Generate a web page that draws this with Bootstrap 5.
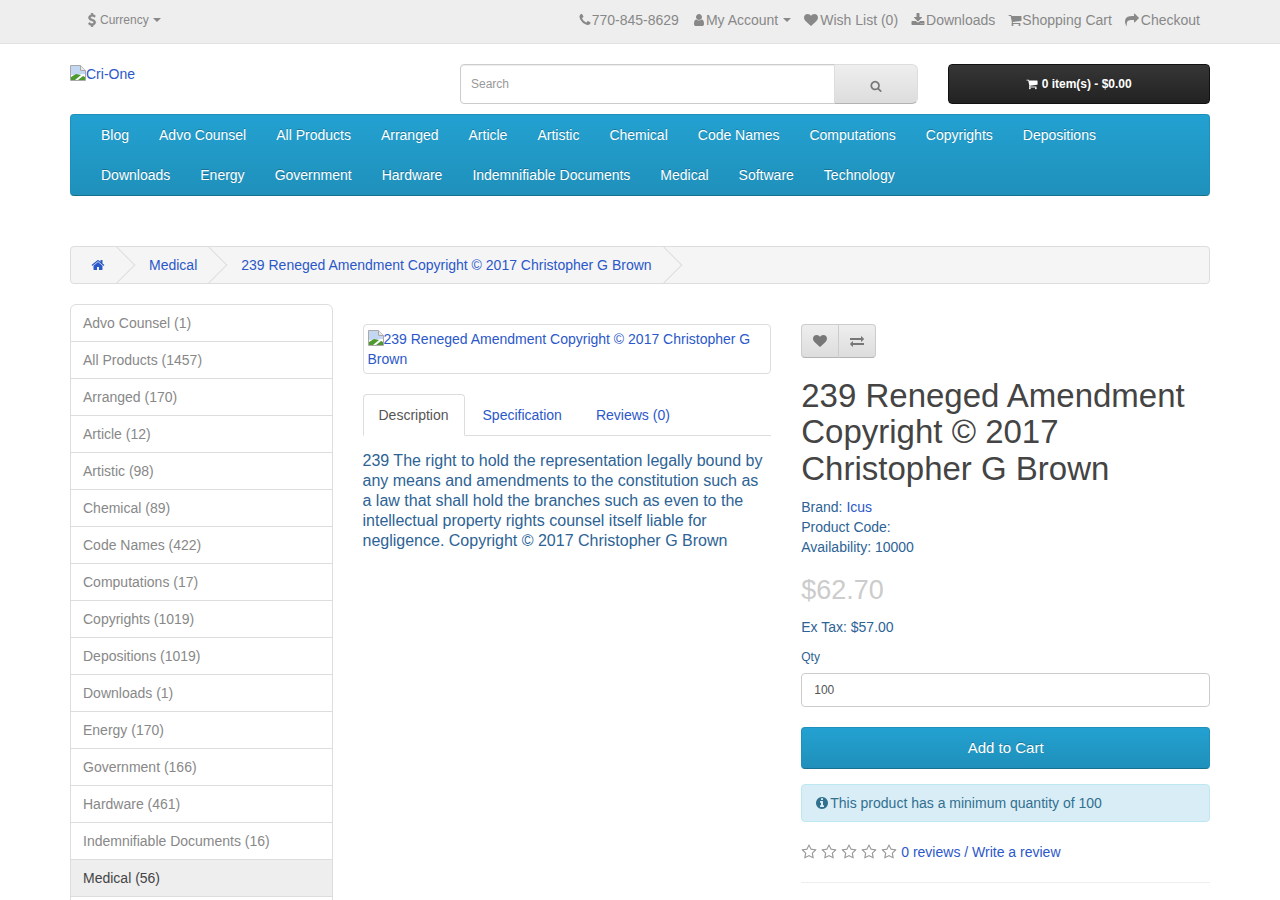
<!DOCTYPE html>
<html lang="en">
<head>
  <meta charset="UTF-8">
  <title>239 Reneged Amendment Copyright © 2017 Christopher G Brown</title>
  <link href="https://cdn.jsdelivr.net/npm/bootstrap@5.3.0/dist/css/bootstrap.min.css" rel="stylesheet">
  <style>
    body { font-family: "Liberation Sans", Arial, sans-serif; font-size: 14px; line-height: 20px; color: #666; }
    a { color: #2b58c9; text-decoration: none; }
    .container { max-width: 1170px; padding-left: 15px; padding-right: 15px; }
    .shop-row { --bs-gutter-x: 30px; --bs-gutter-y: 0; }
    .ico { width: 14px; height: 14px; fill: currentColor; flex: none; display: inline-block; vertical-align: -2px; }

    /* top bar */
    .top-strip { background: #eee; border-bottom: 1px solid #e2e2e2; height: 44px; margin-bottom: 20px; color: #888; }
    .top-strip .container > div { height: 40px; padding: 0 10px 0 15px; }
    .top-strip a { color: #888; display: flex; align-items: center; }
    .top-links { gap: 13px; }
    .ico-wide { margin-right: 2px; }
    .ico-mid { margin-right: 1px; }
    .currency-pick { font-size: 12px; gap: 1px; }
    .ico-heavy { stroke: currentColor; stroke-width: 70px; }
    .top-caret { display: inline-block; width: 0; height: 0; margin-left: 5px; border-top: 4px solid #888; border-left: 4.5px solid transparent; border-right: 4.5px solid transparent; }
    .currency-pick .top-caret { margin-left: 3px; border-left-width: 4px; border-right-width: 4px; }

    /* header */
    .logo-col { height: 40px; }
    .broken-pic { width: 16px; height: 16px; display: inline-block; vertical-align: -2px; }
    .search-box { width: 458px; margin-left: 390px; }
    .search-box .form-control { height: 40px; font-size: 12px; padding: 10px; border-color: #ccc; border-radius: 4px 0 0 4px; box-shadow: inset 0 1px 1px rgba(0,0,0,.075); }
    .search-box .form-control::placeholder { color: #999; }
    .search-box .btn { width: 84px; height: 40px; color: #777; padding: 2px 0 0; }
    .search-box .btn .ico { width: 12px; height: 12px; }
    .grey-btn { background: linear-gradient(to bottom, #eee, #ddd); border: 1px solid #ddd; border-bottom-color: #b3b3b3; color: #777; }
    .cart-btn { width: 262px; height: 40px; margin-left: 30px; background: linear-gradient(to bottom, #363636, #222); border: 1px solid #111; color: #fff; font-size: 12px; font-weight: bold; line-height: 38px; padding: 0; border-radius: 4px; }
    .cart-btn:hover { color: #fff; }
    .cart-btn .ico { width: 12px; height: 12px; }

    /* menu */
    .main-menu { margin: 10px 0 50px; background: linear-gradient(to bottom, #23a1d1, #1f90bb); border: 1px solid #1f90bb; border-bottom: 1px solid #17708f; border-radius: 4px; padding: 0 15px; }
    .main-menu .nav-link { color: #fff; padding: 10px 15px; font-size: 14px; line-height: 20px; text-shadow: 0 -1px 0 rgba(0,0,0,.25); }

    /* breadcrumb */
    .crumb-trail { background: #f5f5f5; border: 1px solid #ddd; border-radius: 4px; padding: 8px 0; margin-bottom: 20px; gap: 4px; overflow: hidden; }
    .crumb-trail .breadcrumb-item { padding: 0 20px; position: relative; }
    .crumb-trail .breadcrumb-item::before { display: none; }
    .crumb-trail .breadcrumb-item::after { content: ""; position: absolute; top: -3px; right: -5px; width: 26px; height: 26px; border-right: 1px solid #ddd; border-bottom: 1px solid #ddd; transform: rotate(-45deg); }

    /* sidebar */
    .side-cats .list-group-item { padding: 8px 12px; color: #888; border-color: #ddd; font-size: 14px; line-height: 20px; }
    .side-cats .list-group-item.active { background: #eee; color: #444; border-color: #ddd; border-top-width: 0; margin-top: 0; }
    .side-cats .cat-next { height: 37px; }

    /* product */
    .pic-frame { display: block; border: 1px solid #ddd; border-radius: 4px; padding: 4px; margin: 20px 0; }
    .product-tabs { border-bottom-color: #ddd; margin-bottom: 15px; }
    .product-tabs .nav-link { padding: 10px 15px; margin-right: 2px; border-radius: 4px 4px 0 0; color: #2b58c9; }
    .product-tabs .nav-link.active { color: #555; border-color: #ddd #ddd #fff; }
    .product-text { font-size: 16px; color: #2d6395; }
    .wish-group { margin-top: 20px; width: 75px; }
    .wish-group .btn { width: 38px; height: 34px; padding: 0; border-radius: 4px; border-color: #ccc; border-bottom-color: #b3b3b3; }
    .product-name { font-size: 33px; line-height: 36.3px; font-weight: 500; color: #444; margin: 20px 0 10px; }
    .product-meta { color: #2d6395; margin-bottom: 19px; }
    .product-price { font-size: 27px; line-height: 29.7px; font-weight: 500; color: #ccc; margin: 0 0 11px; }
    .ex-tax { color: #2d6395; margin-bottom: 10px; }
    .qty-label { font-size: 12px; color: #2d6395; margin-bottom: 6px; display: block; }
    .qty-input { height: 34px; font-size: 12px; color: #555; padding: 6px 12px; border-color: #ccc; border-radius: 4px; margin-bottom: 20px; }
    .add-cart { display: block; width: 100%; height: 42px; padding: 10px 16px; font-size: 15px; line-height: 20px; color: #fff; background: linear-gradient(to bottom, #23a1d1, #1f90bb); border: 1px solid #1f90bb; border-bottom-color: #17708f; border-radius: 4px; margin-bottom: 15px; text-shadow: 0 -1px 0 rgba(0,0,0,.25); }
    .add-cart:hover { color: #fff; }
    .min-note { padding: 8px 14px 8px 13px; margin-bottom: 20px; background: #d9edf7; border: 1px solid #bce8f1; color: #31708f; border-radius: 4px; }
    .min-note .ico { margin-right: 1px; }
    .rating-line { height: 20px; gap: 4px; }
    .rating-line .ico { width: 16px; height: 16px; color: #999; }
    .rating-text { color: #2b58c9; }
    .rule-line { border: 0; border-top: 1px solid #eee; opacity: 1; margin: 20px 0; }
  </style>
</head>
<body>

<svg width="0" height="0" class="d-none">
  <symbol id="i-dollar" viewBox="0 0 1792 1792"><path d="M1362 1185q0 153-99.5 263.5t-258.5 136.5v175q0 14-9 23t-23 9h-135q-13 0-22.5-9.5t-9.5-22.5v-175q-66-9-127.5-31t-101.5-44.5-74-48-46.5-37.5-17.5-18q-17-21-2-41l103-135q7-10 23-12 15-2 24 9l2 2q113 99 243 125 37 8 74 8 81 0 142.5-43t61.5-122q0-28-15-53t-33.5-42-58.5-37.5-66-32-80-32.5q-39-16-61.5-25t-61.5-26.5-62.5-31-56.5-35.5-53.5-42.5-43.5-49-35.5-58-21-66.5-8.5-78q0-138 98-242t255-134v-180q0-13 9.5-22.5t22.5-9.5h135q14 0 23 9t9 23v176q57 6 110.5 23t87 33.5 63.5 37.5 39 29 15 14q17 18 5 38l-81 146q-8 15-23 16-14 3-27-7-3-3-14.5-12t-39-26.5-58.5-32-74.5-26-85.5-11.5q-95 0-155 43t-60 111q0 26 8.5 48t29.5 41.5 39.5 33 56 31 60.5 27 70 27.5q53 20 81 31.5t76 35 75.5 42.5 62 50 53 63.5 31.5 76.5 13 94z"/></symbol>
  <symbol id="i-phone" viewBox="0 0 1792 1792"><path d="M1600 1240q0 27-10 70.5t-21 68.5q-21 50-122 106-94 51-186 51-27 0-53-3.5t-57.5-12.5-47-14.5-55.5-20.5-49-18q-98-35-175-83-127-79-264-216t-216-264q-48-77-83-175-3-9-18-49t-20.5-55.5-14.5-47-12.5-57.5-3.5-53q0-92 51-186 56-101 106-122 25-11 68.5-21t70.5-10q14 0 21 3 18 6 53 76 11 19 30 54t35 63.5 31 53.5q3 4 17.5 25t21.5 35.5 7 28.5q0 20-28.5 50t-62 55-62 53-28.5 46q0 9 5 22.5t8.5 20.5 14 24 11.5 19q76 137 174 235t235 174q2 1 19 11.5t24 14 20.5 8.5 22.5 5q18 0 46-28.5t53-62 55-62 50-28.5q14 0 28.5 7t35.5 21.5 25 17.5q25 15 53.5 31t63.5 35 54 30q70 35 76 53 3 7 3 21z"/></symbol>
  <symbol id="i-user" viewBox="0 0 1792 1792"><path d="M1536 1399q0 109-62.5 187t-150.5 78h-854q-88 0-150.5-78t-62.5-187q0-85 8.5-160.5t31.5-152 58.5-131 94-89 134.5-34.5q131 128 313 128t313-128q76 0 134.5 34.5t94 89 58.5 131 31.5 152 8.5 160.5zm-256-887q0 159-112.5 271.5t-271.5 112.5-271.5-112.5-112.5-271.5 112.5-271.5 271.5-112.5 271.5 112.5 112.5 271.5z"/></symbol>
  <symbol id="i-heart" viewBox="0 0 1792 1792"><path d="M896 1664q-26 0-44-18l-624-602q-10-8-27.5-26t-55.5-65.5-68-97.5-53.5-121-23.5-138q0-220 127-344t351-124q62 0 126.5 21.5t120 58 95.5 68.5 76 68q36-36 76-68t95.5-68.5 120-58 126.5-21.5q224 0 351 124t127 344q0 221-229 450l-623 600q-18 18-44 18z"/></symbol>
  <symbol id="i-download" viewBox="0 0 1792 1792"><path d="M1344 1344q0-26-19-45t-45-19-45 19-19 45 19 45 45 19 45-19 19-45zm256 0q0-26-19-45t-45-19-45 19-19 45 19 45 45 19 45-19 19-45zm128-224v320q0 40-28 68t-68 28h-1472q-40 0-68-28t-28-68v-320q0-40 28-68t68-28h465l135 136q58 56 136 56t136-56l136-136h464q40 0 68 28t28 68zm-325-569q17 41-14 70l-448 448q-18 19-45 19t-45-19l-448-448q-31-29-14-70 17-39 59-39h256v-448q0-26 19-45t45-19h256q26 0 45 19t19 45v448h256q42 0 59 39z"/></symbol>
  <symbol id="i-cart" viewBox="0 0 1792 1792"><path d="M704 1536q0 52-38 90t-90 38-90-38-38-90 38-90 90-38 90 38 38 90zm896 0q0 52-38 90t-90 38-90-38-38-90 38-90 90-38 90 38 38 90zm128-1088v512q0 24-16.5 42.5t-40.5 21.5l-1044 122q13 60 13 70 0 16-24 64h920q26 0 45 19t19 45-19 45-45 19h-1024q-26 0-45-19t-19-45q0-11 8-31.5t16-36 21.5-40 15.5-29.5l-177-823h-204q-26 0-45-19t-19-45 19-45 45-19h256q16 0 28.5 6.5t19.5 15.5 13 24.5 8 26 5.5 29.5 4.5 26h1201q26 0 45 19t19 45z"/></symbol>
  <symbol id="i-share" viewBox="0 0 1792 1792"><path d="M1792 640q0 26-19 45l-512 512q-19 19-45 19t-45-19-19-45v-256h-224q-98 0-175.5 6t-154 21.5-133 42.5-105.5 69.5-80 101-48.5 138-17.5 181q0 55 5 123 0 6 2.5 23.5t2.5 26.5q0 15-8.5 25t-23.5 10q-16 0-28-17-7-9-13-22t-13.5-30-10.5-24q-127-285-127-451 0-199 53-333 162-403 875-403h224v-256q0-26 19-45t45-19 45 19l512 512q19 19 19 45z"/></symbol>
  <symbol id="i-search" viewBox="0 0 1792 1792"><path d="M1216 832q0-185-131.5-316.5t-316.5-131.5-316.5 131.5-131.5 316.5 131.5 316.5 316.5 131.5 316.5-131.5 131.5-316.5zm512 832q0 52-38 90t-90 38q-54 0-90-38l-343-342q-179 124-399 124-143 0-273.5-55.5t-225-150-150-225-55.5-273.5 55.5-273.5 150-225 225-150 273.5-55.5 273.5 55.5 225 150 150 225 55.5 273.5q0 220-124 399l343 343q37 37 37 90z"/></symbol>
  <symbol id="i-home" viewBox="0 0 1792 1792"><path d="M1472 992v480q0 26-19 45t-45 19h-384v-384h-256v384h-384q-26 0-45-19t-19-45v-480q0-1 .5-3t.5-3l575-474 575 474q1 2 1 6zm223-69l-62 74q-8 9-21 11h-3q-13 0-21-7l-692-577-692 577q-12 8-24 7-13-2-21-11l-62-74q-8-10-7-23.5t11-21.5l719-599q32-26 76-26t76 26l244 204v-195q0-14 9-23t23-9h192q14 0 23 9t9 23v408l219 182q10 8 11 21.5t-7 23.5z"/></symbol>
  <symbol id="i-exchange" viewBox="0 0 1792 1792"><path d="M1792 1184v192q0 13-9.5 22.5t-22.5 9.5h-1376v192q0 13-9.5 22.5t-22.5 9.5q-12 0-24-10l-319-320q-9-9-9-22 0-14 9-23l320-320q9-9 23-9 13 0 22.5 9.5t9.5 22.5v192h1376q13 0 22.5 9.5t9.5 22.5zm0-544q0 14-9 23l-320 320q-9 9-23 9-13 0-22.5-9.5t-9.5-22.5v-192h-1376q-13 0-22.5-9.5t-9.5-22.5v-192q0-13 9.5-22.5t22.5-9.5h1376v-192q0-14 9-23t23-9q12 0 24 10l319 319q9 9 9 23z"/></symbol>
  <symbol id="i-info" viewBox="0 0 1792 1792"><path d="M1152 1376v-160q0-14-9-23t-23-9h-96v-512q0-14-9-23t-23-9h-320q-14 0-23 9t-9 23v160q0 14 9 23t23 9h96v320h-96q-14 0-23 9t-9 23v160q0 14 9 23t23 9h448q14 0 23-9t9-23zm-128-896v-160q0-14-9-23t-23-9h-192q-14 0-23 9t-9 23v160q0 14 9 23t23 9h192q14 0 23-9t9-23zm640 416q0 209-103 385.5t-279.5 279.5-385.5 103-385.5-103-279.5-279.5-103-385.5 103-385.5 279.5-279.5 385.5-103 385.5 103 279.5 279.5 103 385.5z"/></symbol>
  <symbol id="i-star" viewBox="0 0 1792 1792"><path d="M1201 1004l306-297-422-62-189-382-189 382-422 62 306 297-73 421 378-199 377 199zm527-357q0 22-26 48l-363 354 86 500q1 7 1 20 0 50-41 50-19 0-40-12l-449-236-449 236q-22 12-40 12-21 0-31.5-14.5t-10.5-35.5q0-6 2-20l86-500-364-354q-25-27-25-48 0-37 56-46l502-73 225-455q19-41 49-41t49 41l225 455 502 73q56 9 56 46z"/></symbol>
  <symbol id="i-broken" viewBox="0 0 16 16"><path d="M.5.5h10l5 5v10H.5z" fill="#fff" stroke="#a9a9a9"/><path d="M10.5.5v5h5" fill="#e8e8e8" stroke="#a9a9a9"/><path d="M1 1h9v5h5v3L1 10z" fill="#c3d7f2"/><path d="M1 15v-3l5-3 5 1-6 5z" fill="#4d9a2e"/><path d="M8 15l5-4 2 1v3z" fill="#4d9a2e"/></symbol>
</svg>

<div class="top-strip">
  <div class="container">
    <div class="d-flex justify-content-between align-items-center">
      <a href="#" class="currency-pick"><svg class="ico ico-heavy"><use href="#i-dollar"/></svg>Currency<span class="top-caret"></span></a>
      <div class="d-flex align-items-center top-links">
        <a href="#"><svg class="ico"><use href="#i-phone"/></svg>770-845-8629</a>
        <a href="#"><svg class="ico"><use href="#i-user"/></svg>My Account <span class="top-caret"></span></a>
        <a href="#"><svg class="ico ico-wide"><use href="#i-heart"/></svg>Wish List (0)</a>
        <a href="#"><svg class="ico ico-mid"><use href="#i-download"/></svg>Downloads</a>
        <a href="#"><svg class="ico"><use href="#i-cart"/></svg>Shopping Cart</a>
        <a href="#"><svg class="ico ico-wide"><use href="#i-share"/></svg>Checkout</a>
      </div>
    </div>
  </div>
</div>

<div class="container">
  <div class="d-flex">
    <div class="logo-col position-relative">
      <a href="#" class="text-nowrap position-absolute top-0 start-0"><svg class="broken-pic"><use href="#i-broken"/></svg>Cri-One</a>
    </div>
    <div class="input-group search-box">
      <input type="text" class="form-control" placeholder="Search">
      <button class="btn grey-btn" type="button"><svg class="ico"><use href="#i-search"/></svg></button>
    </div>
    <a href="#" class="btn cart-btn"><svg class="ico"><use href="#i-cart"/></svg> 0 item(s) - $0.00</a>
  </div>

  <nav class="main-menu">
    <ul class="nav">
      <li class="nav-item"><a class="nav-link" href="#">Blog</a></li>
      <li class="nav-item"><a class="nav-link" href="#">Advo Counsel</a></li>
      <li class="nav-item"><a class="nav-link" href="#">All Products</a></li>
      <li class="nav-item"><a class="nav-link" href="#">Arranged</a></li>
      <li class="nav-item"><a class="nav-link" href="#">Article</a></li>
      <li class="nav-item"><a class="nav-link" href="#">Artistic</a></li>
      <li class="nav-item"><a class="nav-link" href="#">Chemical</a></li>
      <li class="nav-item"><a class="nav-link" href="#">Code Names</a></li>
      <li class="nav-item"><a class="nav-link" href="#">Computations</a></li>
      <li class="nav-item"><a class="nav-link" href="#">Copyrights</a></li>
      <li class="nav-item"><a class="nav-link" href="#">Depositions</a></li>
      <li class="nav-item"><a class="nav-link" href="#">Downloads</a></li>
      <li class="nav-item"><a class="nav-link" href="#">Energy</a></li>
      <li class="nav-item"><a class="nav-link" href="#">Government</a></li>
      <li class="nav-item"><a class="nav-link" href="#">Hardware</a></li>
      <li class="nav-item"><a class="nav-link" href="#">Indemnifiable Documents</a></li>
      <li class="nav-item"><a class="nav-link" href="#">Medical</a></li>
      <li class="nav-item"><a class="nav-link" href="#">Software</a></li>
      <li class="nav-item"><a class="nav-link" href="#">Technology</a></li>
    </ul>
  </nav>

  <ul class="breadcrumb crumb-trail">
    <li class="breadcrumb-item"><a href="#"><svg class="ico"><use href="#i-home"/></svg></a></li>
    <li class="breadcrumb-item"><a href="#">Medical</a></li>
    <li class="breadcrumb-item"><a href="#">239 Reneged Amendment Copyright © 2017 Christopher G Brown</a></li>
  </ul>

  <div class="row shop-row">
    <div class="col-3">
      <div class="list-group side-cats">
        <a href="#" class="list-group-item">Advo Counsel (1)</a>
        <a href="#" class="list-group-item">All Products (1457)</a>
        <a href="#" class="list-group-item">Arranged (170)</a>
        <a href="#" class="list-group-item">Article (12)</a>
        <a href="#" class="list-group-item">Artistic (98)</a>
        <a href="#" class="list-group-item">Chemical (89)</a>
        <a href="#" class="list-group-item">Code Names (422)</a>
        <a href="#" class="list-group-item">Computations (17)</a>
        <a href="#" class="list-group-item">Copyrights (1019)</a>
        <a href="#" class="list-group-item">Depositions (1019)</a>
        <a href="#" class="list-group-item">Downloads (1)</a>
        <a href="#" class="list-group-item">Energy (170)</a>
        <a href="#" class="list-group-item">Government (166)</a>
        <a href="#" class="list-group-item">Hardware (461)</a>
        <a href="#" class="list-group-item">Indemnifiable Documents (16)</a>
        <a href="#" class="list-group-item active">Medical (56)</a>
        <div class="list-group-item cat-next"></div>
      </div>
    </div>
    <div class="col-9">
      <div class="row shop-row">
        <div class="col-6">
          <a href="#" class="pic-frame"><svg class="broken-pic"><use href="#i-broken"/></svg>239 Reneged Amendment Copyright © 2017 Christopher G Brown</a>
          <ul class="nav nav-tabs product-tabs">
            <li class="nav-item"><a class="nav-link active" href="#">Description</a></li>
            <li class="nav-item"><a class="nav-link" href="#">Specification</a></li>
            <li class="nav-item"><a class="nav-link" href="#">Reviews (0)</a></li>
          </ul>
          <p class="product-text">239 The right to hold the representation legally bound by any means and amendments to the constitution such as a law that shall hold the branches such as even to the intellectual property rights counsel itself liable for negligence. Copyright © 2017 Christopher G Brown</p>
        </div>
        <div class="col-6">
          <div class="btn-group wish-group d-flex">
            <button type="button" class="btn grey-btn"><svg class="ico"><use href="#i-heart"/></svg></button>
            <button type="button" class="btn grey-btn"><svg class="ico"><use href="#i-exchange"/></svg></button>
          </div>
          <h1 class="product-name">239 Reneged Amendment Copyright © 2017 Christopher G Brown</h1>
          <ul class="list-unstyled product-meta">
            <li>Brand: <a href="#">Icus</a></li>
            <li>Product Code:</li>
            <li>Availability: 10000</li>
          </ul>
          <h2 class="product-price">$62.70</h2>
          <div class="ex-tax">Ex Tax: $57.00</div>
          <label class="qty-label" for="qty">Qty</label>
          <input id="qty" type="text" class="form-control qty-input" value="100">
          <button type="button" class="btn add-cart">Add to Cart</button>
          <div class="alert min-note"><svg class="ico"><use href="#i-info"/></svg>This product has a minimum quantity of 100</div>
          <div class="d-flex align-items-center rating-line">
            <svg class="ico"><use href="#i-star"/></svg>
            <svg class="ico"><use href="#i-star"/></svg>
            <svg class="ico"><use href="#i-star"/></svg>
            <svg class="ico"><use href="#i-star"/></svg>
            <svg class="ico"><use href="#i-star"/></svg>
            <span class="rating-text"><a href="#">0 reviews</a> / <a href="#">Write a review</a></span>
          </div>
          <hr class="rule-line">
        </div>
      </div>
    </div>
  </div>
</div>

<script src="https://cdn.jsdelivr.net/npm/bootstrap@5.3.0/dist/js/bootstrap.bundle.min.js"></script>
</body>
</html>
